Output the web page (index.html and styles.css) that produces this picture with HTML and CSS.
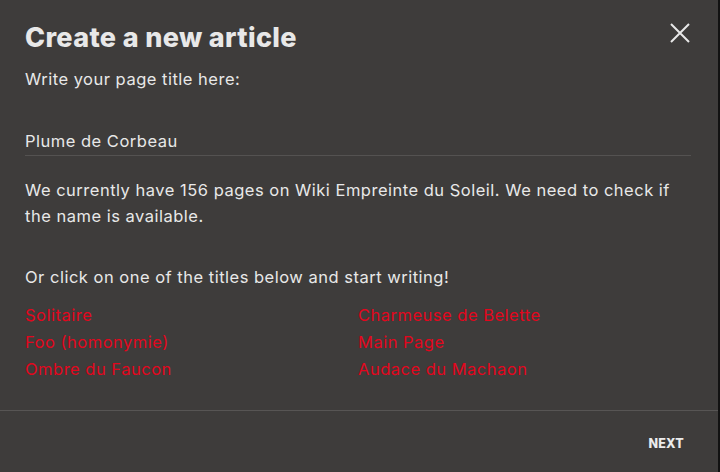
FILE: index.html
```html
<!DOCTYPE html>
<html lang="en">
<head>
<meta charset="utf-8">
<title>Create a new article</title>
<link rel="stylesheet" href="styles.css">
</head>
<body>
<div class="page">
  <div class="modal">
    <div class="body">
      <div class="header">
        <h1 class="title">Create a new article</h1>
        <button class="close" aria-label="Close">
          <svg width="20" height="20" viewBox="0 0 20 20"><path d="M1 1 L19 19 M19 1 L1 19" stroke="#e8e8e8" stroke-width="2" fill="none"/></svg>
        </button>
      </div>
      <p class="label">Write your page title here:</p>
      <div class="input">Plume de Corbeau</div>
      <p class="info">We currently have 156 pages on Wiki Empreinte du Soleil. We need to check if the name is available.</p>
      <p class="or">Or click on one of the titles below and start writing!</p>
      <ul class="links">
        <li><a href="#">Solitaire</a></li>
        <li><a href="#">Charmeuse de Belette</a></li>
        <li><a href="#">Foo (homonymie)</a></li>
        <li><a href="#">Main Page</a></li>
        <li><a href="#">Ombre du Faucon</a></li>
        <li><a href="#">Audace du Machaon</a></li>
      </ul>
    </div>
    <div class="footer">
      <button class="next">NEXT</button>
    </div>
  </div>
  <div class="edge"></div>
</div>
</body>
</html>
```

FILE: styles.css
```css
html, body {
  margin: 0;
  padding: 0;
  background: #121212;
}
.page {
  display: flex;
  width: 720px;
  height: 472px;
}
.modal {
  width: 718px;
  height: 472px;
  background: #3e3c3b;
  color: #e8e8e8;
  font-family: Inter, "Noto Sans", sans-serif;
  display: flex;
  flex-direction: column;
}
.edge {
  width: 2px;
  background: #121212;
}
.body {
  padding: 21px 27px 0 25px;
  height: 389px;
}
.header {
  display: flex;
  justify-content: space-between;
  align-items: flex-start;
}
.title {
  margin: 0;
  font-size: 27px;
  font-weight: 800;
  line-height: 34px;
  letter-spacing: 0.35px;
}
.close {
  background: none;
  border: 0;
  padding: 0;
  margin: 2px 1px 0 0;
  width: 20px;
  height: 20px;
  cursor: pointer;
}
.close svg { display: block; }
.label, .input, .info, .or, .links li {
  font-size: 16.5px;
  line-height: 26px;
  letter-spacing: 0.5px;
}
.label {
  margin: 11px 0 0;
}
.input {
  margin-top: 36px;
  padding-bottom: 1px;
  border-bottom: 1px solid #545251;
}
.info {
  margin: 21px 0 0;
}
.or {
  margin: 35px 0 0;
}
.links {
  list-style: none;
  margin: 12px 0 0;
  padding: 0;
  display: grid;
  grid-template-columns: 333px 1fr;
  row-gap: 1px;
}
.links a {
  color: #e3061d;
  text-decoration: none;
}
.footer {
  border-top: 1px solid #575554;
  flex: 1;
  display: flex;
  justify-content: flex-end;
  align-items: center;
  padding: 4px 34px 0 0;
}
.next {
  background: none;
  border: 0;
  padding: 0;
  color: #ececec;
  font-family: Inter, "Noto Sans", sans-serif;
  font-size: 12.5px;
  font-weight: 800;
  letter-spacing: 0.2px;
}
```
